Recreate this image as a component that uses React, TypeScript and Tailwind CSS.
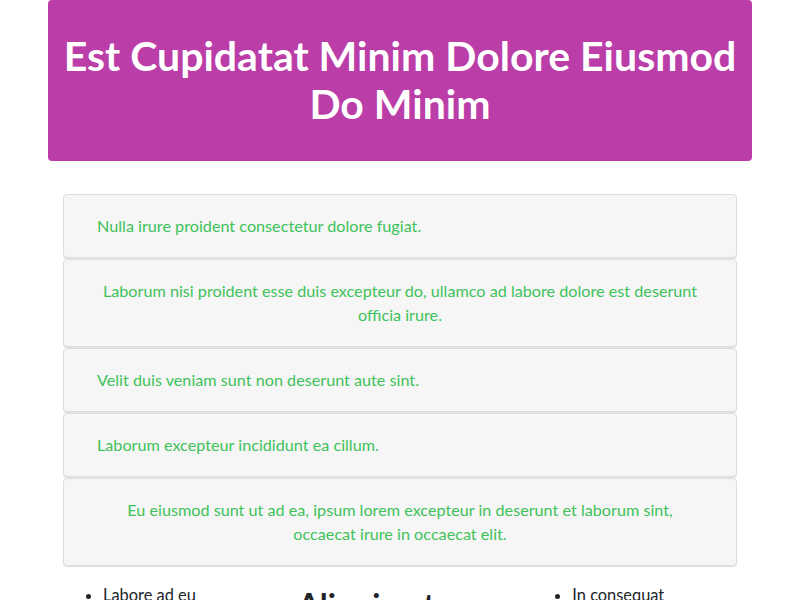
const cards = [
  'Nulla irure proident consectetur dolore fugiat.',
  'Laborum nisi proident esse duis excepteur do, ullamco ad labore dolore est deserunt officia irure.',
  'Velit duis veniam sunt non deserunt aute sint.',
  'Laborum excepteur incididunt ea cillum.',
  'Eu eiusmod sunt ut ad ea, ipsum lorem excepteur in deserunt et laborum sint, occaecat irure in occaecat elit.',
];

export default function App() {
  return (
    <div className="w-full bg-white font-['Lato','Open_Sans',sans-serif] text-[#212529]">
      <div className="mx-auto w-[704px]">
        <header className="rounded bg-[#bb3da8] px-2 pt-8 pb-[33px] text-center">
          <h1 className="text-[41px] font-bold leading-[48px] text-white">
            Est Cupidatat Minim Dolore Eiusmod Do Minim
          </h1>
        </header>

        <div className="mt-[33px] flex flex-col gap-[1px] px-[15px]">
          {cards.map((text) => (
            <div
              key={text}
              className="flex items-start rounded border border-[#dddddd] bg-[#f6f6f6] px-[33px] py-[19px] shadow-[0_1px_1px_rgba(0,0,0,0.12)]"
            >
              <p className="text-center text-[16.2px] leading-6 text-[#3ec25a]">{text}</p>
            </div>
          ))}
        </div>

        <div className="mt-[17px] grid grid-cols-3">
          <div className="px-[15px]">
            <ul className="list-disc pl-10 text-[16.4px] leading-6">
              <li>Labore ad eu</li>
              <li>Commodo aute</li>
            </ul>
          </div>
          <div className="px-[15px] pt-[3px]">
            <h2 className="text-[32px] font-bold leading-[38px]">Aliquip et</h2>
          </div>
          <div className="px-[15px]">
            <ul className="list-disc pl-10 text-[16.4px] leading-6">
              <li>In consequat</li>
              <li>Sunt nulla</li>
            </ul>
          </div>
        </div>
      </div>
    </div>
  );
}
